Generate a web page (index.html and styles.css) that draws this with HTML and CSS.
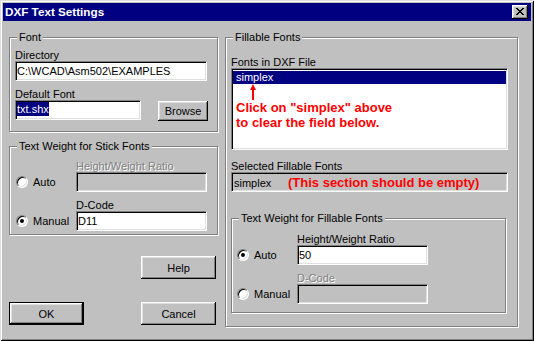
FILE: index.html
```html
<!DOCTYPE html>
<html>
<head>
<meta charset="utf-8">
<link rel="stylesheet" href="styles.css">
</head>
<body>
<div class="window">
  <div class="titlebar">
    <span class="title">DXF Text Settings</span>
    <span class="close"><svg width="8" height="7" viewBox="0 0 8 7"><path fill="#000" d="M0 0h2v1H0z M6 0h2v1H6z M1 1h2v1H1z M5 1h2v1H5z M2 2h4v1H2z M3 3h2v1H3z M2 4h4v1H2z M1 5h2v1H1z M5 5h2v1H5z M0 6h2v1H0z M6 6h2v1H6z"/></svg></span>
  </div>
  <div class="body">
    <div class="col-left">
      <div class="group g-font">
        <div class="legend">Font</div>
        <div class="lbl lbl-dir">Directory</div>
        <div class="edit w-dir">C:\WCAD\Asm502\EXAMPLES</div>
        <div class="lbl lbl-def">Default Font</div>
        <div class="row">
          <div class="edit w-def"><span class="sel">txt.shx</span></div>
          <div class="btn btn-browse">Browse</div>
        </div>
      </div>
      <div class="group g-stick">
        <div class="legend">Text Weight for Stick Fonts</div>
        <div class="opt opt-first">
          <div class="radio-wrap"><span class="radio"></span>Auto</div>
          <div class="field">
            <div class="lbl disabled">Height/Weight Ratio</div>
            <div class="edit dis w-num"></div>
          </div>
        </div>
        <div class="opt opt-second">
          <div class="radio-wrap"><span class="radio checked"></span>Manual</div>
          <div class="field">
            <div class="lbl">D-Code</div>
            <div class="edit w-num">D11</div>
          </div>
        </div>
      </div>
      <div class="btn btn-help">Help</div>
      <div class="btn-row">
        <div class="btn btn-default">OK</div>
        <div class="btn btn-cancel">Cancel</div>
      </div>
    </div>
    <div class="col-right">
      <div class="group g-fill">
        <div class="legend">Fillable Fonts</div>
        <div class="lbl lbl-list">Fonts in DXF File</div>
        <div class="list">
          <div class="item">simplex</div>
          <svg class="arrow" width="9" height="16" viewBox="0 0 9 16"><path fill="#f00" d="M4 0L1 6H3V16H5V6H7Z"/></svg>
          <div class="note">Click on "simplex" above<br>to clear the field below.</div>
        </div>
        <div class="lbl lbl-sel">Selected Fillable Fonts</div>
        <div class="edit dis w-sel"><span class="sel-name">simplex</span><span class="warn">(This section should be empty)</span></div>
        <div class="group g-fweight">
          <div class="legend">Text Weight for Fillable Fonts</div>
          <div class="opt opt-first-r">
            <div class="radio-wrap rw-r"><span class="radio checked"></span>Auto</div>
            <div class="field">
              <div class="lbl">Height/Weight Ratio</div>
              <div class="edit w-num">50</div>
            </div>
          </div>
          <div class="opt opt-second">
            <div class="radio-wrap rw-r"><span class="radio"></span>Manual</div>
            <div class="field">
              <div class="lbl disabled">D-Code</div>
              <div class="edit dis w-num"></div>
            </div>
          </div>
        </div>
      </div>
    </div>
  </div>
</div>
</body>
</html>
```
FILE: styles.css
```css
html, body {
  margin: 0;
  padding: 0;
  background: #c0c0c0;
}

.window {
  width: 534px;
  height: 341px;
  box-sizing: border-box;
  padding: 3px;
  background: #c0c0c0;
  box-shadow: inset 1px 1px #dfdfdf, inset -1px -1px #000, inset 2px 2px #fff, inset -2px -2px #808080;
  font-family: "Liberation Sans", Arial, sans-serif;
  font-size: 11px;
  color: #000;
  display: flex;
  flex-direction: column;
}

.titlebar {
  height: 18px;
  flex: none;
  background: #000080;
  color: #fff;
  display: flex;
  align-items: center;
  justify-content: space-between;
  padding: 0 3px 0 2px;
}

.title {
  font-weight: bold;
  font-size: 11.7px;
  line-height: 14px;
  white-space: nowrap;
}

.close {
  width: 16px;
  height: 14px;
  box-sizing: border-box;
  padding: 3px 0 0 4px;
  background: #c0c0c0;
  box-shadow: inset -1px -1px #000, inset 1px 1px #fff, inset -2px -2px #808080, inset 2px 2px #dfdfdf;
}

.close svg {
  display: block;
}

.body {
  flex: 1;
  display: flex;
  align-items: flex-start;
  padding: 16px 0 0 6px;
}

.col-left {
  width: 209px;
  display: flex;
  flex-direction: column;
}

.col-right {
  margin-left: 7px;
}

.group {
  box-sizing: border-box;
  border: 1px solid #808080;
  box-shadow: 1px 1px 0 #fff, inset 1px 1px 0 #fff;
  padding-left: 5px;
  display: flex;
  flex-direction: column;
  align-items: flex-start;
}

.legend {
  background: #c0c0c0;
  padding: 0 2px;
  margin: -7px 0 0 2px;
  height: 12px;
  line-height: 12px;
  white-space: nowrap;
}

.lbl {
  height: 12px;
  line-height: 12px;
  white-space: nowrap;
}

.disabled {
  color: #808080;
  text-shadow: 1px 1px 0 #fff;
}

.edit {
  box-sizing: border-box;
  height: 20px;
  border: 1px solid;
  border-color: #808080 #fff #fff #808080;
  box-shadow: inset 1px 1px #000, inset -1px -1px #dfdfdf;
  background: #fff;
  padding: 1px 0 0 1px;
  line-height: 16px;
  white-space: nowrap;
  overflow: hidden;
}

.edit.dis {
  background: #c0c0c0;
}

.btn {
  box-sizing: border-box;
  width: 75px;
  height: 23px;
  display: flex;
  align-items: center;
  justify-content: center;
  background: #c0c0c0;
  box-shadow: inset -1px -1px #000, inset 1px 1px #fff, inset -2px -2px #808080, inset 2px 2px #dfdfdf;
}

/* Font group */
.g-font {
  width: 209px;
  height: 95px;
}

.lbl-dir {
  margin-top: 6px;
}

.w-dir {
  width: 192px;
}

.lbl-def {
  margin-top: 7px;
}

.row {
  display: flex;
  align-items: flex-start;
}

.w-def {
  width: 126px;
}

.sel {
  display: inline-block;
  vertical-align: top;
  background: #000080;
  color: #fff;
  line-height: 14px;
}

.btn-browse {
  width: 50px;
  height: 20px;
  margin: 1px 0 0 17px;
}

/* Stick group */
.g-stick {
  width: 209px;
  height: 89px;
  margin-top: 14px;
}

.opt {
  display: flex;
  align-items: flex-end;
}

.opt-first {
  margin-top: 8px;
}

.opt-first-r {
  margin-top: 9px;
}

.opt-second {
  margin-top: 7px;
}

.radio-wrap {
  box-sizing: border-box;
  width: 61px;
  height: 20px;
  padding-left: 1px;
  display: flex;
  align-items: center;
  white-space: nowrap;
}

.radio-wrap.rw-r {
  width: 60px;
  padding-left: 0;
}

.radio {
  position: relative;
  box-sizing: border-box;
  width: 12px;
  height: 12px;
  flex: none;
  margin-right: 5px;
  border-radius: 50%;
  border: 1px solid;
  border-color: #808080 #fff #fff #808080;
  box-shadow: inset 1px 1px #000, inset -1px -1px #dfdfdf;
  background: #fff;
}

.radio.checked::after {
  content: "";
  position: absolute;
  left: 3px;
  top: 3px;
  width: 4px;
  height: 4px;
  border-radius: 50%;
  background: #000;
}

.field {
  display: flex;
  flex-direction: column;
}

.w-num {
  width: 131px;
}

/* Buttons */
.btn-help {
  margin: 21px 0 0 132px;
}

.btn-row {
  display: flex;
  justify-content: space-between;
  margin-top: 23px;
  width: 207px;
}

.btn-default {
  border: 1px solid #000;
}

/* Fillable group */
.g-fill {
  width: 293px;
  height: 290px;
}

.lbl-list {
  margin-top: 13px;
}

.list {
  box-sizing: border-box;
  width: 277px;
  height: 82px;
  border: 1px solid;
  border-color: #808080 #fff #fff #808080;
  box-shadow: inset 1px 1px #000, inset -1px -1px #dfdfdf;
  background: #fff;
  padding: 1px;
}

.item {
  margin-top: 1px;
  height: 13px;
  line-height: 13px;
  padding-left: 3px;
  background: #000080;
  color: #fff;
}

.arrow {
  display: block;
  margin-left: 16px;
}

.note {
  color: #f00;
  font-weight: bold;
  font-size: 13px;
  line-height: 15px;
  padding-left: 3px;
  white-space: nowrap;
}

.lbl-sel {
  margin-top: 10px;
}

.w-sel {
  width: 277px;
  display: flex;
  align-items: center;
  padding-left: 2px;
}

.sel-name {
  width: 54px;
  flex: none;
}

.warn {
  color: #f00;
  font-weight: bold;
  font-size: 13px;
}

.g-fweight {
  width: 275px;
  height: 95px;
  margin-top: 26px;
}
```
